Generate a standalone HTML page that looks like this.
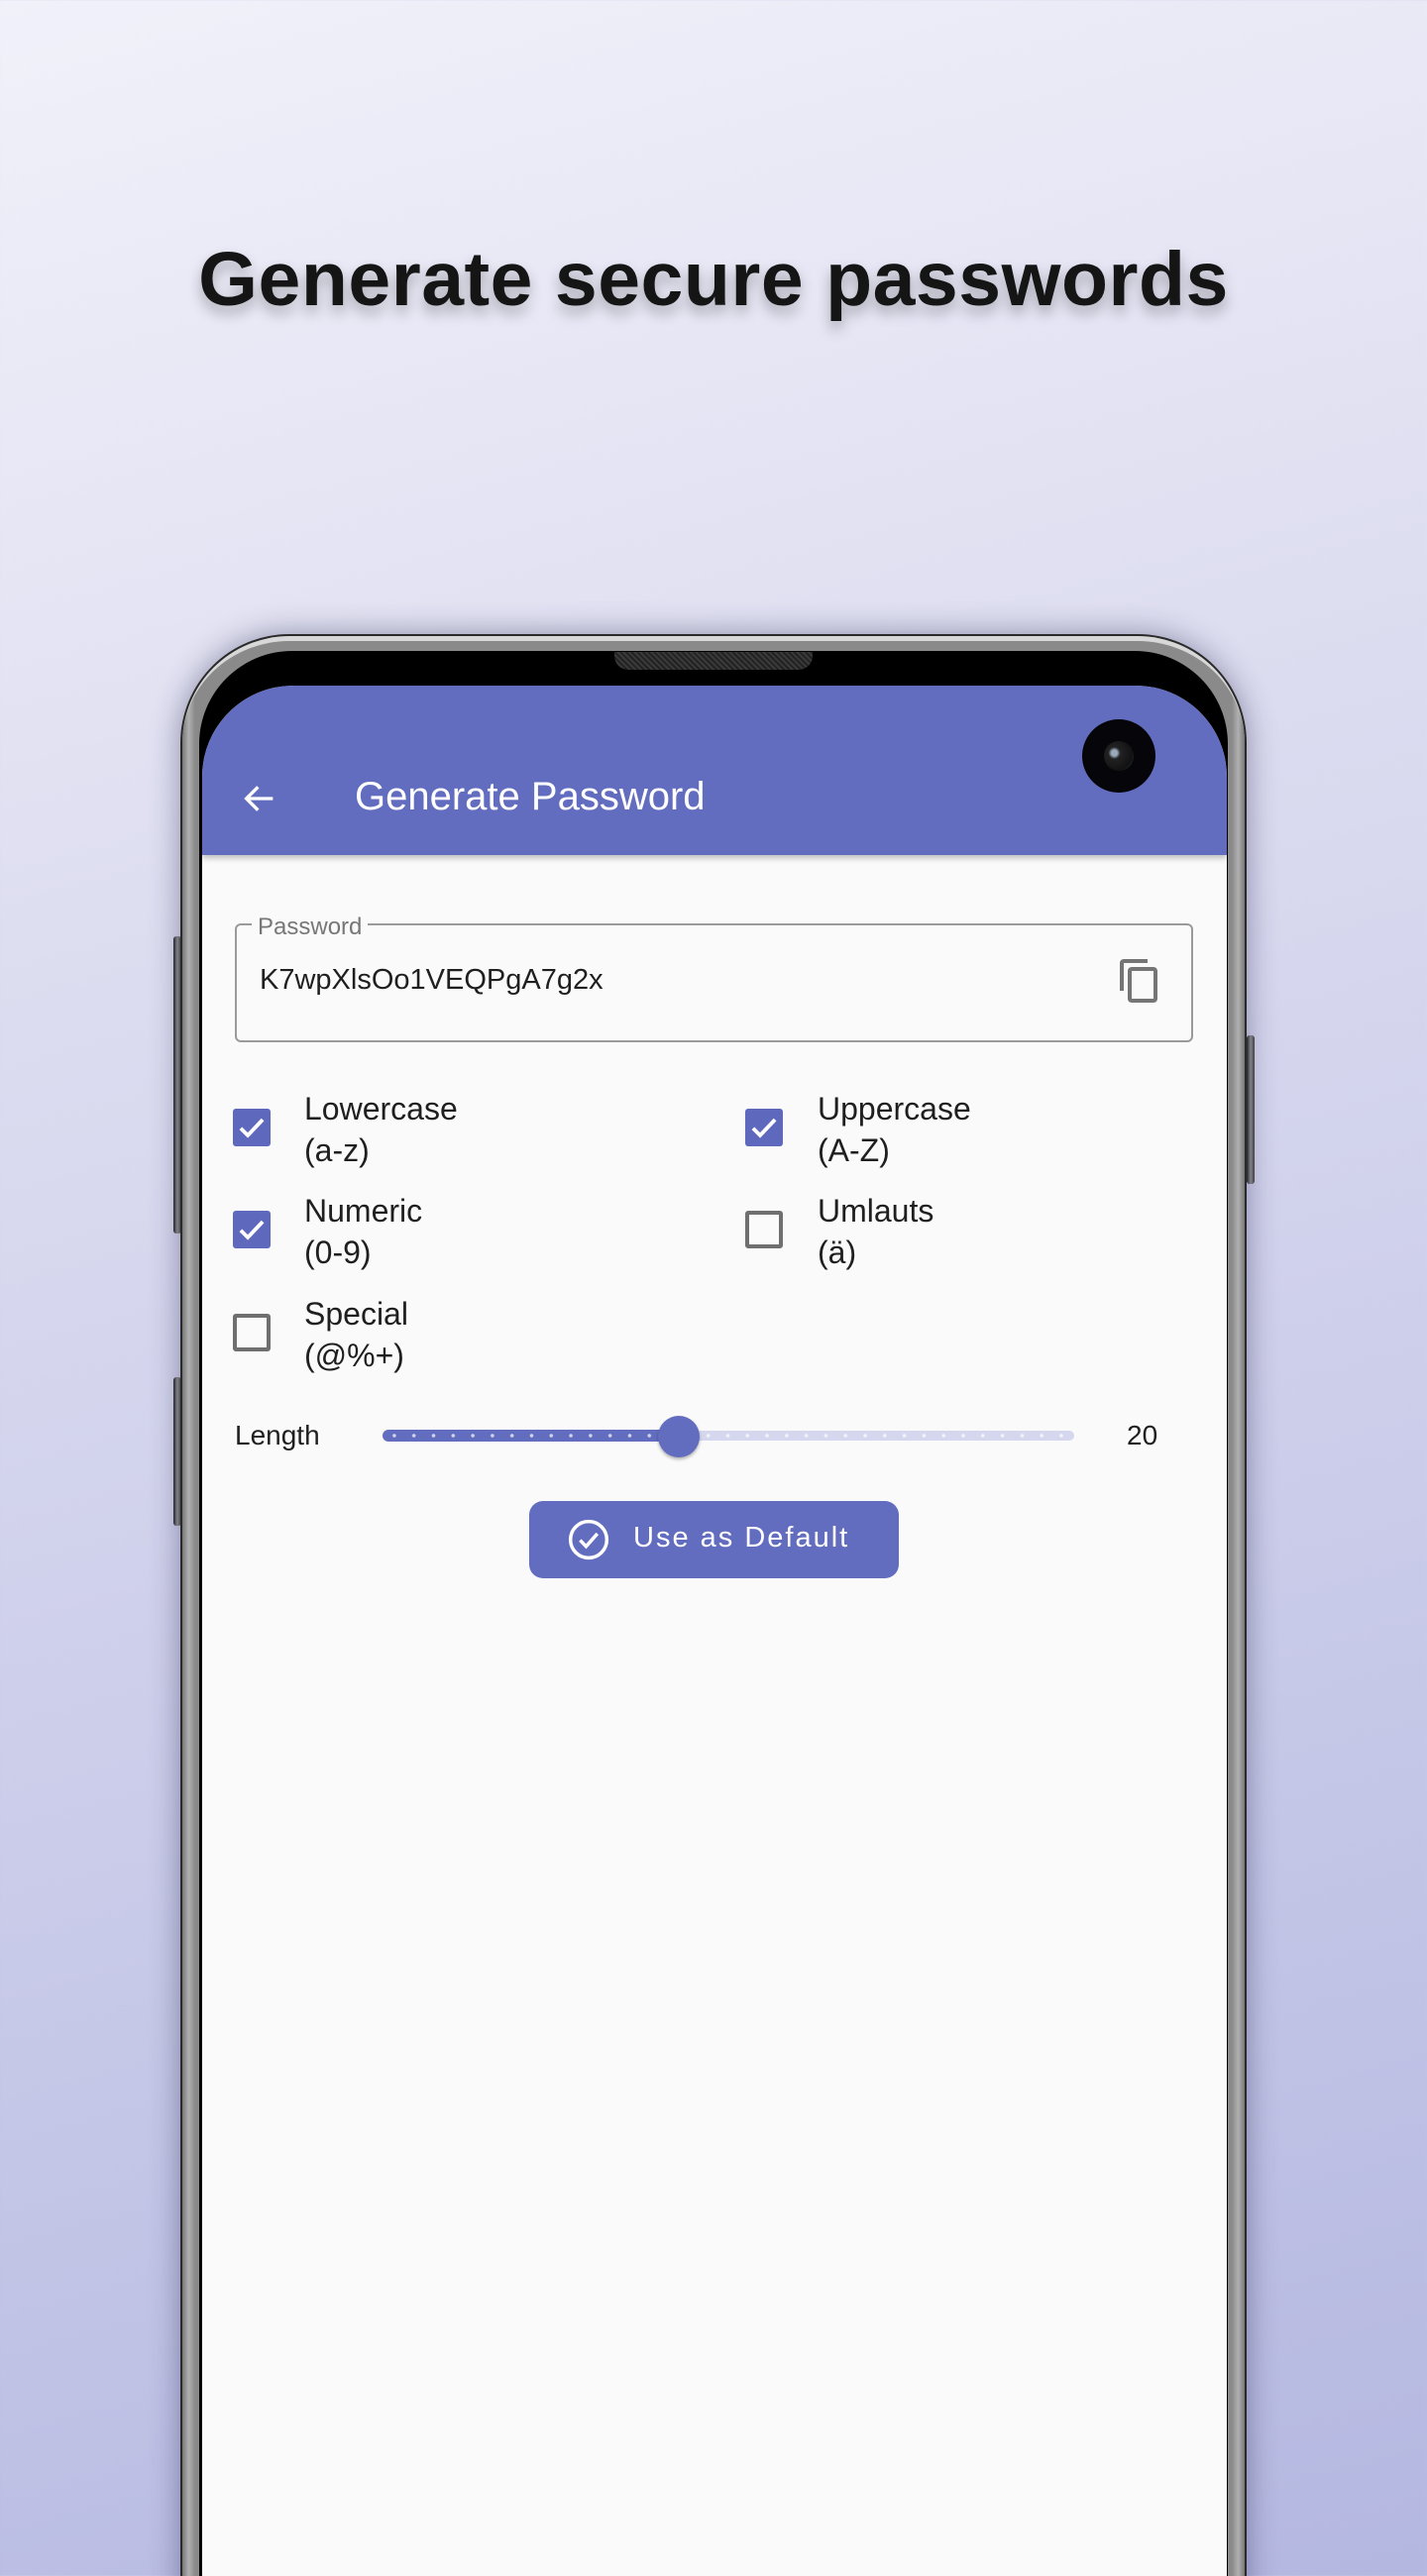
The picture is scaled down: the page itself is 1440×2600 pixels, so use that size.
<!DOCTYPE html>
<html><head><meta charset="utf-8">
<style>
*{margin:0;padding:0;box-sizing:border-box}
html,body{width:1440px;height:2600px;overflow:hidden}
body{background:linear-gradient(165deg,#f1f1fa 0%,#dcdcf0 35%,#c6c8e8 70%,#b4b7e0 100%);font-family:"Liberation Sans",sans-serif;position:relative}
h1{position:absolute;top:238px;left:0;width:1440px;text-align:center;font-size:77px;font-weight:bold;color:#151515;letter-spacing:0.5px;text-shadow:0 8px 14px rgba(0,0,0,0.28)}
.phone{position:absolute;left:182px;top:640px;width:1076px;height:2000px;border-radius:110px 110px 0 0;background:#2a2a2a;box-shadow:0 0 30px rgba(40,40,80,0.45)}
.l2{position:absolute;left:2px;right:2px;top:2px;bottom:0;border-radius:108px 108px 0 0;background:linear-gradient(90deg,#777,#b0b0b0 0.6%,#8a8a8a 1.2%,#8a8a8a 98.8%,#b0b0b0 99.4%,#777);border-top:5px solid #d8d8d8}
.inner{position:absolute;left:19px;right:19px;top:17px;bottom:0;border-radius:94px 94px 0 0;background:#000}
.screen{position:absolute;left:204px;top:692px;width:1034px;height:1908px;background:#fafafa;border-radius:92px 92px 0 0;overflow:hidden}
.bar{position:absolute;left:0;top:0;width:100%;height:171px;background:#636dbf;box-shadow:0 3px 6px rgba(0,0,0,0.25)}
.speaker{position:absolute;left:620px;top:658px;width:200px;height:18px;background:repeating-linear-gradient(45deg,#222 0 2px,#3a3a3a 2px 4px);border-radius:0 0 14px 14px}
.btnside{position:absolute;background:linear-gradient(90deg,#222,#999,#444);border-radius:3px;width:8px}
.cam{position:absolute;left:1092px;top:726px;width:74px;height:74px;border-radius:50%;background:#06060a}
.cam:after{content:"";position:absolute;left:22px;top:22px;width:30px;height:30px;border-radius:50%;background:radial-gradient(circle at 35% 40%,#9ab 0 3px,#222 6px,#111 70%,#4a7a90)}
.t{position:absolute;color:#1f1f1f;white-space:nowrap}
.cb{position:absolute;width:38px;height:38px;border-radius:3px}
.on{background:#5e68bd}
.off{border:4px solid #6f6f6f}
</style></head><body>
<h1>Generate secure passwords</h1>
<div class="btnside" style="left:175px;top:945px;height:300px"></div>
<div class="btnside" style="left:175px;top:1390px;height:150px"></div>
<div class="btnside" style="left:1258px;top:1045px;height:150px"></div>
<div class="phone"><div class="l2"></div><div class="inner"></div></div>
<div class="speaker"></div>
<div class="screen">
 <div class="bar"></div>
 <svg style="position:absolute;left:38px;top:94px" width="40" height="40" viewBox="0 0 24 24"><path d="M20 12H5M11 5l-7 7 7 7" fill="none" stroke="#fff" stroke-width="2"/></svg>
 <div class="t" style="left:154px;top:90px;font-size:40px;color:#fff">Generate Password</div>
 <div style="position:absolute;left:33px;top:240px;width:967px;height:120px;border:2px solid #9a9a9a;border-radius:6px"></div>
 <div class="t" style="left:50px;top:230px;padding:0 6px;background:#fafafa;font-size:24px;color:#777">Password</div>
 <div class="t" style="left:58px;top:281px;font-size:29px">K7wpXlsOo1VEQPgA7g2x</div>
 <svg style="position:absolute;left:922px;top:274px" width="48" height="48" viewBox="0 0 24 24"><path d="M16 1H4c-1.1 0-2 .9-2 2v14h2V3h12V1zm3 4H8c-1.1 0-2 .9-2 2v14c0 1.1.9 2 2 2h11c1.1 0 2-.9 2-2V7c0-1.1-.9-2-2-2zm0 16H8V7h11v14z" fill="#757575"/></svg>
</div>
<div class="cam"></div>
<div class="cb on" style="left:235px;top:1119px"><svg width="38" height="38" viewBox="0 0 24 24"><path d="M5 12.5l4.5 4.5L19 7" fill="none" stroke="#fff" stroke-width="2.4"/></svg></div>
<div class="cb on" style="left:752px;top:1119px"><svg width="38" height="38" viewBox="0 0 24 24"><path d="M5 12.5l4.5 4.5L19 7" fill="none" stroke="#fff" stroke-width="2.4"/></svg></div>
<div class="cb on" style="left:235px;top:1222px"><svg width="38" height="38" viewBox="0 0 24 24"><path d="M5 12.5l4.5 4.5L19 7" fill="none" stroke="#fff" stroke-width="2.4"/></svg></div>
<div class="cb off" style="left:752px;top:1222px"></div>
<div class="cb off" style="left:235px;top:1326px"></div>
<div class="t" style="left:307px;top:1098px;font-size:32px;line-height:42px">Lowercase<br>(a-z)</div>
<div class="t" style="left:825px;top:1098px;font-size:32px;line-height:42px">Uppercase<br>(A-Z)</div>
<div class="t" style="left:307px;top:1201px;font-size:32px;line-height:42px">Numeric<br>(0-9)</div>
<div class="t" style="left:825px;top:1201px;font-size:32px;line-height:42px">Umlauts<br>(ä)</div>
<div class="t" style="left:307px;top:1305px;font-size:32px;line-height:42px">Special<br>(@%+)</div>
<div class="t" style="left:237px;top:1433px;font-size:28px">Length</div>
<div style="position:absolute;left:386px;top:1444px;width:698px;height:10px;border-radius:5px;background:#d5d7ee"></div>
<div style="position:absolute;left:386px;top:1443px;width:300px;height:12px;border-radius:6px;background:#636dbf"></div>
<div style="position:absolute;left:388px;top:1447px;width:694px;height:4px;background:radial-gradient(circle,rgba(255,255,255,0.7) 0 1.6px,transparent 2px) 0 0/19.8px 4px"></div>
<div style="position:absolute;left:664px;top:1429px;width:42px;height:42px;border-radius:50%;background:#636dbf;box-shadow:0 2px 3px rgba(0,0,0,0.3)"></div>
<div class="t" style="left:1137px;top:1433px;font-size:28px">20</div>
<div style="position:absolute;left:534px;top:1515px;width:373px;height:78px;border-radius:14px;background:#636dbf"></div>
<svg style="position:absolute;left:572px;top:1532px" width="44" height="44" viewBox="0 0 24 24"><circle cx="12" cy="12" r="10" fill="none" stroke="#fff" stroke-width="1.9"/><path d="M7.3 12.3l3.3 3.4 6.2-7" fill="none" stroke="#fff" stroke-width="1.9"/></svg>
<div class="t" style="left:639px;top:1536px;font-size:29px;color:#fff;letter-spacing:2px">Use as Default</div>
</body></html>
